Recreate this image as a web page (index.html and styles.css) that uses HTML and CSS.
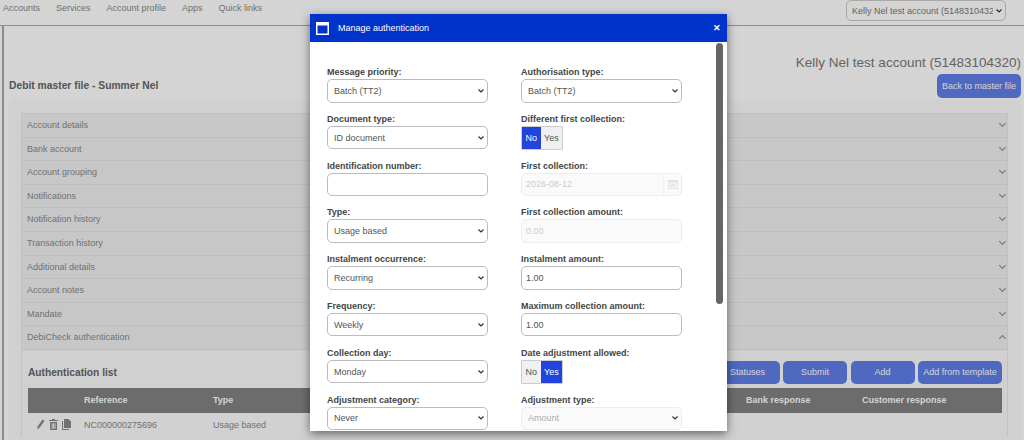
FILE: index.html
```html
<!DOCTYPE html>
<html lang="en">
<head>
  <meta charset="UTF-8" />
  <title>Manage authentication</title>
  <link rel="stylesheet" href="styles.css">
</head>
<body>
  <!-- top menu -->
  <div class="navbar">
    <div class="nav-links">
      <span>Accounts</span>
      <span>Services</span>
      <span>Account profile</span>
      <span>Apps</span>
      <span>Quick links</span>
    </div>
    <select class="account-select">
      <option>Kelly Nel test account (51483104320)</option>
    </select>
  </div>

  <div class="page">
    <div class="page-head">
      <h2 class="page-title">Debit master file - Summer Nel</h2>
      <div class="page-account">
        <div class="account-name">Kelly Nel test account (51483104320)</div>
        <button class="btn btn-back">Back to master file</button>
      </div>
    </div>

    <div class="panel">
      <div class="accordion">
        <div class="acc-row">Account details</div>
        <div class="acc-row">Bank account</div>
        <div class="acc-row">Account grouping</div>
        <div class="acc-row">Notifications</div>
        <div class="acc-row">Notification history</div>
        <div class="acc-row">Transaction history</div>
        <div class="acc-row">Additional details</div>
        <div class="acc-row">Account notes</div>
        <div class="acc-row">Mandate</div>
        <div class="acc-row acc-open">DebiCheck authentication</div>
        <div class="acc-body">
          <div class="list-head">
            <h3>Authentication list</h3>
            <div class="list-actions">
              <button class="btn">Statuses</button>
              <button class="btn">Submit</button>
              <button class="btn">Add</button>
              <button class="btn btn-wide">Add from template</button>
            </div>
          </div>
          <table class="list-table">
            <thead>
              <tr>
                <th class="col-icons"></th>
                <th class="col-ref">Reference</th>
                <th class="col-type">Type</th>
                <th class="col-bank">Bank response</th>
                <th>Customer response</th>
              </tr>
            </thead>
            <tbody>
              <tr>
                <td class="row-icons">
                  <svg width="9" height="11" viewBox="0 0 9 11"><path d="M6.6 0.6l2 1.4-4.9 6.6-2.5 1.9 0.5-3.2z" fill="#888"/></svg>
                  <svg width="9" height="11" viewBox="0 0 9 11"><path d="M3 0h3v1h3v1H0V1h3zM1 3h7v8H1zM2.6 4.2v5.6h.9V4.2zM4.1 4.2v5.6h.9V4.2zM5.6 4.2v5.6h.9V4.2z" fill="#888" fill-rule="evenodd"/></svg>
                  <svg width="9" height="11" viewBox="0 0 9 11"><path d="M2 0h4.5L9 2.5V9H2zM0 2h1v8h6v1H0z" fill="#888"/></svg>
                </td>
                <td>NC000000275696</td>
                <td>Usage based</td>
                <td></td>
                <td></td>
              </tr>
            </tbody>
          </table>
        </div>
      </div>
    </div>
  </div>

  <div class="overlay"></div>

  <!-- authentication dialog -->
  <div class="modal">
    <div class="modal-head">
      <svg class="modal-icon" width="13" height="13" viewBox="0 0 13 13"><path d="M0 0h13v13H0zM1.5 3.5v8h10v-8z" fill="#fff" fill-rule="evenodd"/></svg>
      <span class="modal-title">Manage authentication</span>
      <span class="modal-close">&#10005;</span>
    </div>
    <div class="modal-body">
      <div class="form-grid">
        <div class="field">
          <label>Message priority:</label>
          <select><option>Batch (TT2)</option></select>
        </div>
        <div class="field">
          <label>Authorisation type:</label>
          <select><option>Batch (TT2)</option></select>
        </div>

        <div class="field">
          <label>Document type:</label>
          <select><option>ID document</option></select>
        </div>
        <div class="field">
          <label>Different first collection:</label>
          <div class="toggle">
            <span class="on">No</span><span>Yes</span>
          </div>
        </div>

        <div class="field">
          <label>Identification number:</label>
          <input type="text" value="">
        </div>
        <div class="field">
          <label>First collection:</label>
          <div class="date-wrap">
            <input type="text" value="2026-08-12" disabled>
            <span class="date-btn">
              <svg width="10" height="10" viewBox="0 0 10 10"><path d="M0 1h10v9H0zM1 3.5V9h8V3.5z" fill="#e2e2e2" fill-rule="evenodd"/><path d="M2 4.5h6v3.5H2z" fill="#e8e8e8"/></svg>
            </span>
          </div>
        </div>

        <div class="field">
          <label>Type:</label>
          <select><option>Usage based</option></select>
        </div>
        <div class="field">
          <label>First collection amount:</label>
          <input type="text" value="0.00" disabled>
        </div>

        <div class="field">
          <label>Instalment occurrence:</label>
          <select><option>Recurring</option></select>
        </div>
        <div class="field">
          <label>Instalment amount:</label>
          <input type="text" value="1.00">
        </div>

        <div class="field">
          <label>Frequency:</label>
          <select><option>Weekly</option></select>
        </div>
        <div class="field">
          <label>Maximum collection amount:</label>
          <input type="text" value="1.00">
        </div>

        <div class="field">
          <label>Collection day:</label>
          <select><option>Monday</option></select>
        </div>
        <div class="field">
          <label>Date adjustment allowed:</label>
          <div class="toggle">
            <span>No</span><span class="on">Yes</span>
          </div>
        </div>

        <div class="field">
          <label>Adjustment category:</label>
          <select><option>Never</option></select>
        </div>
        <div class="field">
          <label>Adjustment type:</label>
          <select disabled><option>Amount</option></select>
        </div>
      </div>
      <div class="scroll-thumb"></div>
    </div>
  </div>
</body>
</html>
```

FILE: styles.css
```css
/* base */
html, body {
  height: 100%;
}
body {
  margin: 0;
  height: 440px;
  overflow: hidden;
  position: relative;
  background: #fff;
  color: #555;
  font-family: "Liberation Sans", Arial, sans-serif;
  font-size: 9px;
}
select {
  appearance: none;
  background-color: #fff;
  background-image: url("data:image/svg+xml,%3Csvg xmlns='http://www.w3.org/2000/svg' width='6' height='4'%3E%3Cpath d='M.5.5l2.5 2.5 2.5-2.5' fill='none' stroke='%23333' stroke-width='1.2'/%3E%3C/svg%3E");
  background-repeat: no-repeat;
  background-position: right 3px center;
}

/* top menu */
.navbar {
  height: 25px;
  display: flex;
  align-items: flex-start;
  justify-content: space-between;
  padding: 0 18px 0 3px;
  background: #fff;
  border-bottom: 1px solid #aaa;
}
.nav-links {
  display: flex;
  gap: 16px;
  line-height: 16px;
  color: #888;
}
.account-select {
  box-sizing: border-box;
  width: 160px;
  height: 21px;
  padding: 0 12px 0 5px;
  font: 9px "Liberation Sans", Arial, sans-serif;
  color: #777;
  border: 1px solid #ccc;
  border-radius: 5px;
}

/* page under the dialog */
.page {
  height: 414px;
  margin-left: 2px;
  padding-left: 4px;
  padding-right: 3px;
  border-left: 2px solid #aaa;
  background: #fff;
}
.page-head {
  height: 74px;
  display: flex;
  justify-content: space-between;
  align-items: flex-end;
}
.page-title {
  margin: 0 0 7px 0;
  padding-left: 1px;
  font-size: 10.3px;
  line-height: 14px;
  color: #666;
}
.page-account {
  display: flex;
  flex-direction: column;
  align-items: flex-end;
  gap: 1px;
  margin-bottom: 2px;
}
.account-name {
  font-size: 13.5px;
  line-height: 20px;
  color: #777;
}
.btn {
  width: 64px;
  height: 23px;
  padding: 0;
  border: none;
  border-radius: 5px;
  background: #607de7;
  color: #fff;
  font: 9px "Liberation Sans", Arial, sans-serif;
}
.btn-back {
  width: 84px;
  height: 24px;
}
.btn-wide {
  width: 84px;
}

.panel {
  height: 340px;
  padding: 13px 13px 0 13px;
  background: #fafafa;
  border-radius: 8px 8px 0 0;
}
.accordion {
  border: 1px solid #e8e8e8;
  border-bottom: none;
}
.acc-row {
  position: relative;
  height: 23.6px;
  box-sizing: border-box;
  padding-left: 5px;
  line-height: 22.5px;
  color: #888;
  background: #f0f0f0;
  border-bottom: 1px solid #e4e4e4;
}
.acc-row::after {
  content: "";
  position: absolute;
  right: 2px;
  top: 7px;
  width: 4px;
  height: 4px;
  border-right: 1px solid #888;
  border-bottom: 1px solid #888;
  transform: rotate(45deg);
}
.acc-open::after {
  top: 10px;
  transform: rotate(225deg);
}
.acc-body {
  padding: 11px 5px 0 6px;
}
.list-head {
  display: flex;
  justify-content: space-between;
  align-items: center;
  margin-bottom: 4px;
}
.list-head h3 {
  margin: 0;
  font-size: 10.2px;
  color: #666;
}
.list-actions {
  display: flex;
  gap: 3.5px;
}

.list-table {
  width: 974px;
  border-collapse: collapse;
  table-layout: fixed;
}
.list-table th {
  height: 25px;
  padding: 0;
  text-align: left;
  font-size: 9px;
  color: #fff;
  background: #828282;
}
.list-table td {
  height: 24px;
  padding: 0;
  font-size: 9px;
  color: #888;
  background: #fcfcfc;
}
.col-icons { width: 56px; }
.col-ref { width: 129px; }
.col-type { width: 533px; }
.col-bank { width: 116px; }
.list-table .row-icons {
  padding-left: 8px;
  font-size: 0;
}
.row-icons svg {
  margin-right: 4px;
  vertical-align: middle;
}

.overlay {
  position: absolute;
  inset: 0;
  background: rgba(0, 0, 0, 0.17);
}

/* dialog */
.modal {
  position: absolute;
  left: 310px;
  top: 14px;
  width: 417px;
  height: 417px;
  background: #fff;
  box-shadow: 0 3px 9px rgba(0, 0, 0, 0.5);
  overflow: hidden;
}
.modal-head {
  height: 28px;
  display: flex;
  align-items: center;
  padding: 0 6px;
  background: #0033cc;
  color: #fff;
}
.modal-icon {
  margin-right: 9px;
}
.modal-title {
  flex: 1;
  font-size: 9px;
}
.modal-close {
  font-size: 9px;
  font-weight: bold;
}
.modal-body {
  position: relative;
  height: 389px;
  overflow: hidden;
}
.scroll-thumb {
  position: absolute;
  right: 4px;
  top: 1px;
  width: 7px;
  height: 261px;
  border-radius: 4px;
  background: #666;
}
.form-grid {
  display: grid;
  grid-template-columns: 161px 161px;
  column-gap: 33px;
  grid-auto-rows: 46.8px;
  padding: 24px 0 0 17px;
}
.field label {
  display: block;
  height: 13px;
  font-size: 9px;
  line-height: 13px;
  font-weight: bold;
  color: #444;
}
.field select,
.field input {
  display: block;
  box-sizing: border-box;
  width: 161px;
  height: 23.5px;
  margin: 0;
  padding: 0 4px;
  font: 9px "Liberation Sans", Arial, sans-serif;
  color: #555;
  background-color: #fff;
  border: 1px solid #bbb;
  border-radius: 5px;
}
.field select {
  padding: 0 6px;
}
.field input:disabled,
.field select:disabled {
  color: #ccc;
  background-color: #fafafa;
  border-color: #eee;
  opacity: 1;
}
.field select:disabled {
  color: #aaa;
}
.date-wrap {
  position: relative;
}
.date-btn {
  position: absolute;
  right: 0;
  top: 0;
  width: 18px;
  height: 23px;
  display: flex;
  align-items: center;
  justify-content: center;
  border-left: 1px solid #f0f0f0;
}
.toggle {
  display: inline-flex;
  height: 22px;
  border: 1px solid #ccc;
  border-radius: 1px;
  background: #f0f0f0;
  font-size: 9px;
  line-height: 22px;
  color: #555;
}
.toggle span {
  padding: 0 3.5px;
}
.toggle .on {
  background: #2244dd;
  color: #fff;
}
```
